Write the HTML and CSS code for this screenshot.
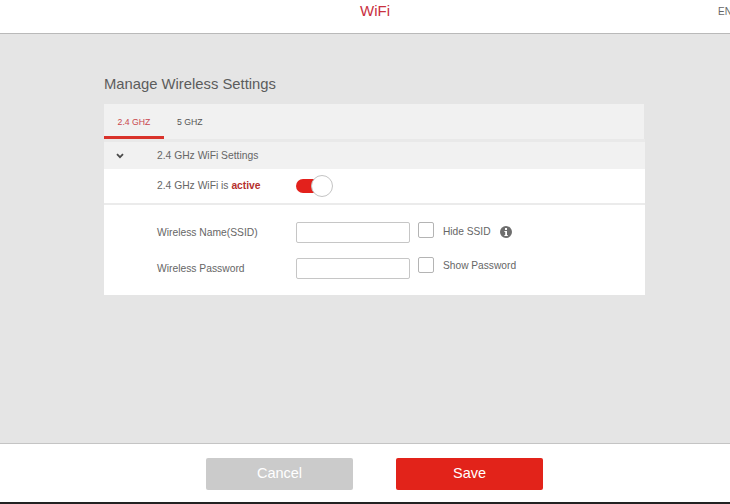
FILE: index.html
```html
<!DOCTYPE html>
<html lang="en">
<head>
<meta charset="utf-8">
<title>WiFi</title>
<link rel="stylesheet" href="styles.css">
</head>
<body>
<div class="page">
  <header class="topbar">
    <h1 class="topbar-title">WiFi</h1>
    <span class="topbar-lang">EN</span>
  </header>
  <main class="content">
    <h2 class="section-title">Manage Wireless Settings</h2>
    <div class="tabs">
      <div class="tab tab-active">2.4 GHZ</div>
      <div class="tab">5 GHZ</div>
    </div>
    <div class="accordion-head">
      <svg class="chevron" width="8" height="6" viewBox="0 0 8 6"><path d="M1 1.2 4 4.2 7 1.2" fill="none" stroke="#4a4a4a" stroke-width="1.8"/></svg>
      <span class="accordion-label">2.4 GHz WiFi Settings</span>
    </div>
    <div class="status-row">
      <span class="row-label">2.4 GHz WiFi is <b class="active-word">active</b></span>
      <span class="switch"><span class="switch-track"></span><span class="switch-knob"></span></span>
    </div>
    <div class="form">
      <div class="form-row form-row-first">
        <label class="row-label field-label">Wireless Name(SSID)</label>
        <span class="field"></span>
        <span class="checkbox"></span>
        <span class="check-label">Hide SSID</span>
        <svg class="info" width="12" height="12" viewBox="0 0 12 12"><circle cx="6" cy="6" r="6" fill="#6e6e6e"/><rect x="5" y="2" width="2" height="2" fill="#fff"/><path d="M4.4 5H7V8.9H7.8V10H4.4V8.9H5.2V6H4.4Z" fill="#fff"/></svg>
      </div>
      <div class="form-row form-row-second">
        <label class="row-label field-label">Wireless Password</label>
        <span class="field"></span>
        <span class="checkbox"></span>
        <span class="check-label">Show Password</span>
      </div>
    </div>
  </main>
  <footer class="actions">
    <button class="btn btn-cancel" type="button">Cancel</button>
    <button class="btn btn-save" type="button">Save</button>
  </footer>
</div>
</body>
</html>
```
FILE: styles.css
```css
* { box-sizing: border-box; }
html, body { margin: 0; padding: 0; }
body { font-family: "Liberation Sans", Arial, sans-serif; color: #666; overflow: hidden; }
.page { width: 730px; height: 504px; display: flex; flex-direction: column; overflow: hidden; background: #e5e5e5; }

.topbar { height: 34px; flex: none; display: flex; align-items: flex-start; background: #fff; border-bottom: 1px solid #b9b9b9; padding-left: 360px; overflow: hidden; }
.topbar-title { margin: 2px 0 0; width: 30px; font-size: 15px; line-height: 17px; font-weight: 400; color: #c9313f; }
.topbar-lang { flex: none; margin: 6px 0 0 328px; font-size: 10px; line-height: 12px; color: #666; }

.content { flex: 1; padding: 41px 85px 0 104px; }
.section-title { margin: 0 0 10px; height: 19px; font-size: 14.8px; line-height: 19px; font-weight: 400; color: #5c5c5c; }

.tabs { display: flex; height: 35px; margin-right: 1px; background: #f1f1f1; }
.tab { width: 60px; height: 35px; padding-top: 13px; text-align: center; font-size: 8.7px; line-height: 10px; color: #555; }
.tab + .tab { width: 52px; text-align: left; padding-left: 13px; }
.tab-active { color: #c9474f; border-bottom: 3px solid #d9322b; }

.accordion-head { height: 30px; display: flex; align-items: center; background: #f1f1f1; border-top: 3px solid #e9e9e9; padding-left: 12px; }
.chevron { flex: none; }
.accordion-label { margin-left: 33px; font-size: 10.3px; color: #666; }

.status-row { height: 34px; display: flex; align-items: center; background: #fff; padding-left: 53px; }
.row-label { width: 139px; flex: none; font-size: 10.3px; line-height: 12px; color: #666; }
.active-word { color: #b5302c; font-weight: 700; }
.switch { position: relative; width: 37px; height: 22px; flex: none; }
.switch-track { position: absolute; left: 0; top: 4px; width: 28px; height: 14px; border-radius: 7px; background: #e3211c; }
.switch-knob { position: absolute; left: 15px; top: 0; width: 22px; height: 22px; border-radius: 50%; background: #fff; border: 1px solid #c4c4c4; }

.form { height: 92px; background: #fff; border-top: 2px solid #ebebeb; padding: 16px 0 0 53px; }
.form-row { display: flex; align-items: center; height: 22px; }
.form-row-second { margin-top: 14px; }
.field-label { margin-top: 2px; }
.field { width: 114px; height: 21px; flex: none; background: #fff; border: 1px solid #c6c6c6; border-radius: 2px; }
.checkbox { width: 16px; height: 16px; flex: none; margin: 0 0 4px 8px; background: #fff; border: 1px solid #b4b4b4; border-radius: 2px; }
.check-label { margin: 0 0 2px 9px; font-size: 10.2px; color: #666; }
.form-row-second .checkbox { margin-bottom: 6px; }
.form-row-second .check-label { margin-bottom: 6px; }
.info { margin-left: 9px; flex: none; }

.actions { height: 61px; flex: none; display: flex; padding: 14px 0 0 206px; background: #fff; border-top: 1px solid #c4c4c4; border-bottom: 2px solid #222; }
.btn { width: 147px; height: 32px; border: 0; border-radius: 2px; font-family: inherit; font-size: 14.5px; color: #fff; padding: 0 0 2px; }
.btn-cancel { background: #cbcbcb; }
.btn-save { margin-left: 43px; background: #e2231a; }
```
